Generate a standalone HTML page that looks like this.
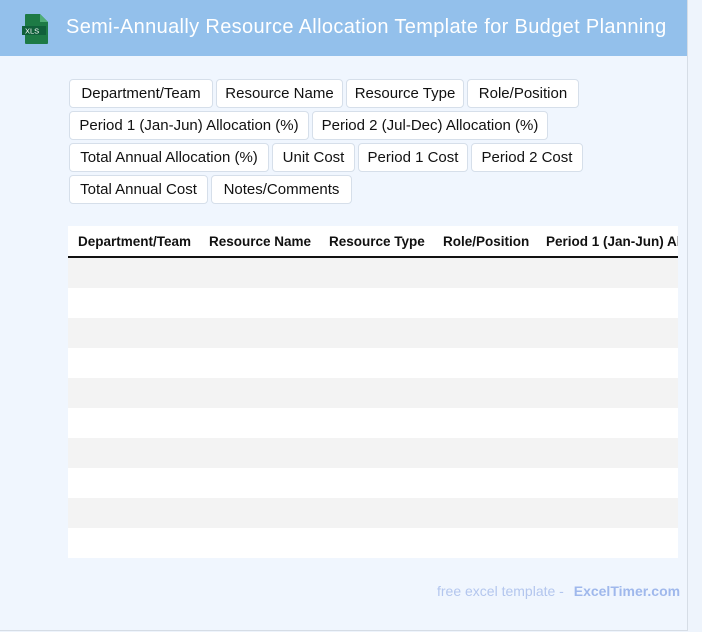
<!DOCTYPE html>
<html><head><meta charset="utf-8"><style>
*{box-sizing:border-box;margin:0;padding:0}
body{width:702px;height:632px;background:#eef4fc;font-family:"Liberation Sans",Arial,sans-serif;position:relative;overflow:hidden}
.frame{position:absolute;left:0;top:0;width:688px;height:631px;background:#f0f6fe;border-right:1px solid #d6dde6;border-bottom:1px solid #d6dde6}
.hdr{position:absolute;left:0;top:0;width:687px;height:56px;background:#93c0eb}
.hdr h1{position:absolute;left:66px;top:16px;font-size:20px;letter-spacing:0.35px;font-weight:normal;color:#fff;white-space:nowrap}
.tag{position:absolute;height:29px;background:#fff;border:1px solid #d6dfea;border-radius:4px;font-size:15px;color:#111;text-align:center;line-height:27px;white-space:nowrap}
.th{position:absolute;left:68px;top:226px;width:610px;height:32px;background:#fff;border-bottom:2px solid #111;overflow:hidden}
.th span{position:absolute;top:8px;font-size:13.5px;font-weight:bold;color:#111;white-space:nowrap}
.row{position:absolute;left:68px;width:610px;height:30px}
.foot{position:absolute;top:583px;left:437px;font-size:14px;color:#b3c6ee;white-space:nowrap}
.foot b{color:#9fb8ec;margin-left:6px}
</style></head><body>
<div class="frame"></div>
<div class="hdr">
<svg style="position:absolute;left:22px;top:13px" width="28" height="32" viewBox="0 0 28 32">
<path d="M4 1h14l8 8v21a1 1 0 0 1-1 1H4a1 1 0 0 1-1-1V2a1 1 0 0 1 1-1z" fill="#1d7a45"/>
<path d="M18 1v8h8z" fill="#4fae76"/>
<rect x="0" y="13" width="24" height="9" fill="#10603a"/>
<text x="3" y="20.5" font-size="7.5" fill="#fff" font-family="Liberation Sans">XLS</text>
</svg>
<h1>Semi-Annually Resource Allocation Template for Budget Planning</h1>
</div>
<div class="tag" style="left:69px;top:79px;width:144px">Department/Team</div>
<div class="tag" style="left:216px;top:79px;width:127px">Resource Name</div>
<div class="tag" style="left:346px;top:79px;width:118px">Resource Type</div>
<div class="tag" style="left:467px;top:79px;width:112px">Role/Position</div>
<div class="tag" style="left:69px;top:111px;width:240px">Period 1 (Jan-Jun) Allocation (%)</div>
<div class="tag" style="left:312px;top:111px;width:236px">Period 2 (Jul-Dec) Allocation (%)</div>
<div class="tag" style="left:69px;top:143px;width:200px">Total Annual Allocation (%)</div>
<div class="tag" style="left:272px;top:143px;width:83px">Unit Cost</div>
<div class="tag" style="left:358px;top:143px;width:110px">Period 1 Cost</div>
<div class="tag" style="left:471px;top:143px;width:112px">Period 2 Cost</div>
<div class="tag" style="left:69px;top:175px;width:139px">Total Annual Cost</div>
<div class="tag" style="left:211px;top:175px;width:141px">Notes/Comments</div>
<div class="th">
<span style="left:10px">Department/Team</span>
<span style="left:141px">Resource Name</span>
<span style="left:261px">Resource Type</span>
<span style="left:375px">Role/Position</span>
<span style="left:478px">Period 1 (Jan-Jun) Allocation (%)</span>
</div>
<div class="row" style="top:258px;background:#f3f3f3"></div>
<div class="row" style="top:288px;background:#fff"></div>
<div class="row" style="top:318px;background:#f3f3f3"></div>
<div class="row" style="top:348px;background:#fff"></div>
<div class="row" style="top:378px;background:#f3f3f3"></div>
<div class="row" style="top:408px;background:#fff"></div>
<div class="row" style="top:438px;background:#f3f3f3"></div>
<div class="row" style="top:468px;background:#fff"></div>
<div class="row" style="top:498px;background:#f3f3f3"></div>
<div class="row" style="top:528px;background:#fff"></div>
<div class="foot">free excel template - <b>ExcelTimer.com</b></div>
</body></html>
